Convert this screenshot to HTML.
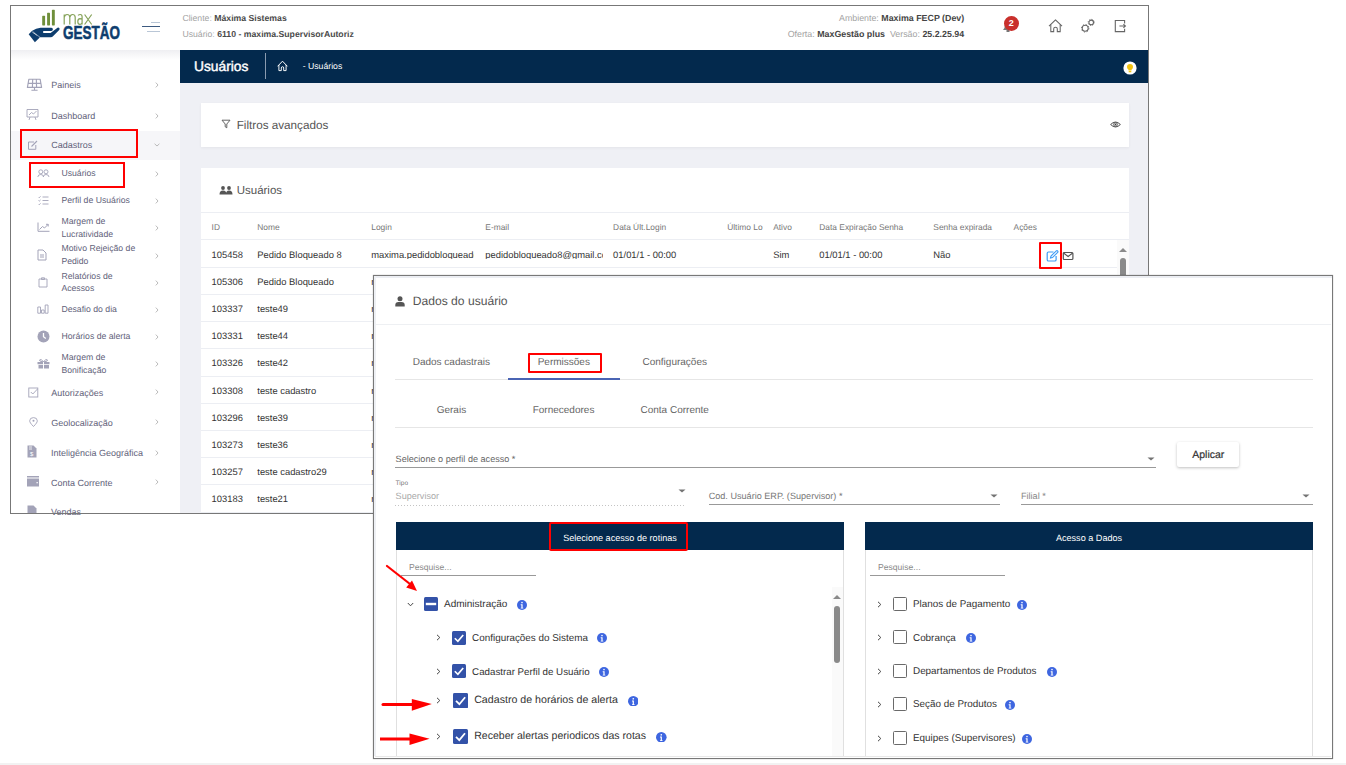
<!DOCTYPE html>
<html><head><meta charset="utf-8"><style>
html,body{margin:0;padding:0;width:1346px;height:765px;overflow:hidden;background:#fff;font-family:"Liberation Sans",sans-serif}
.t{position:absolute;white-space:nowrap;line-height:1;text-rendering:geometricPrecision}
.r{position:absolute;display:block}
</style></head><body>
<div class="r" style="left:0px;top:763px;width:1346px;height:2px;background:#f2f2f2"></div>
<div class="r" style="left:10px;top:5px;width:1139px;height:509px;border:1px solid #777;box-sizing:border-box;background:#fff"></div>
<div class="r" style="left:180px;top:83px;width:968px;height:430px;background:#eff0f5"></div>
<div class="r" style="left:11px;top:50px;width:169px;height:10px;background:linear-gradient(#efeff2,#fff)"></div>
<div class="r" style="left:180px;top:50px;width:968px;height:33px;background:#03294d"></div>
<svg class="r" style="left:26px;top:8px;" width="100" height="38" viewBox="0 0 100 38">
<rect x="16.2" y="7.8" width="2.9" height="9.6" rx="0.6" fill="#6f8f3a"/>
<rect x="21.1" y="4.8" width="2.9" height="12.6" rx="0.6" fill="#6f8f3a"/>
<rect x="25.9" y="1.8" width="2.9" height="15.6" rx="0.6" fill="#6f8f3a"/>
<path d="M2.7 26.3 L6.2 22.7 L13.8 29.6 L8.9 34.2 Z" fill="#0d3d6e"/>
<path d="M6.4 24.1 L11.3 27.5" stroke="#fff" stroke-width="0.8"/>
<path d="M6.2 22.7 Q10 20.2 14.6 19.7 H25.4 Q26.9 19.8 26.9 21.3 Q26.8 22.9 25.3 23 H17.2 V24.9 H24.6 L31.5 19.7 Q32.5 19.1 33.3 19.9 Q34 20.8 33.2 21.9 L27.2 28 Q26.2 29.2 24.6 29.2 H14.2 Z" fill="#0d3d6e"/>
<path d="M38.2 6.5 V16.5 M38.2 9.5 Q38.8 6.5 41.1 6.5 Q43.8 6.5 43.8 9.5 V16.5 M43.8 9.5 Q44.4 6.5 46.6 6.5 Q49.2 6.5 49.2 9.5 V16.5" fill="none" stroke="#86a35a" stroke-width="1.2"/>
<path d="M52 7.4 Q53 6.5 54.3 6.5 Q56.1 6.5 56.1 8.8 V16.5 M56.1 11.1 Q55 10.7 54 10.7 Q51.8 10.9 51.8 13.7 Q51.9 16.4 54 16.4 Q55.6 16.4 56.1 14.8" fill="none" stroke="#86a35a" stroke-width="1.2"/>
<path d="M58.6 6.5 L65.7 16.5 M65.7 6.5 L58.6 16.5" fill="none" stroke="#86a35a" stroke-width="1.2"/>
<text x="37" y="31.5" font-family="Liberation Sans" font-weight="700" font-size="17.5" fill="#0d3d6e" stroke="#0d3d6e" stroke-width="0.55" transform="translate(37 0) scale(0.77 1) translate(-37 0)">GESTÃO</text>
</svg>
<div class="r" style="left:151px;top:21.5px;width:9px;height:1.3px;background:#b9c6d6"></div>
<div class="r" style="left:142px;top:26px;width:18px;height:1.3px;background:#3d5a80"></div>
<div class="r" style="left:147px;top:30.5px;width:13px;height:1.3px;background:#b9c6d6"></div>
<div class="t" style="left:182.40px;top:14px;font-size:8.7px;color:#4a4a4a;font-weight:400;"><span style="color:#a3a3a3">Cliente:</span> <b>Máxima Sistemas</b></div>
<div class="t" style="left:182.40px;top:30px;font-size:8.7px;color:#4a4a4a;font-weight:400;"><span style="color:#a3a3a3">Usuário:</span> <b>6110 - maxima.SupervisorAutoriz</b></div>
<div class="t" style="right:381.80px;top:14px;font-size:8.85px;color:#444;font-weight:400;"><span style="color:#a3a3a3">Ambiente:</span> <b>Maxima FECP (Dev)</b></div>
<div class="t" style="right:381.80px;top:30px;font-size:8.85px;color:#444;font-weight:400;"><span style="color:#a3a3a3">Oferta:</span> <b>MaxGestão plus</b> &nbsp;<span style="color:#a3a3a3">Versão:</span> <b>25.2.25.94</b></div>
<svg class="r" style="left:1000px;top:18px;" width="16" height="16" viewBox="0 0 16 16"><path d="M3 12 Q5 10 5 6 Q5 3 8 3 Q11 3 11 6 Q11 10 13 12 Z" fill="#777"/><rect x="6.5" y="12" width="3" height="2" fill="#777"/></svg>
<div class="r" style="left:1003.8px;top:16.4px;width:14.8px;height:14.8px;border-radius:50%;background:#c9302c;color:#fff;font-size:9px;font-weight:700;text-align:center;line-height:14.8px">2</div>
<svg class="r" style="left:1048px;top:19px;" width="15" height="14" viewBox="0 0 15 14"><path d="M1 7.2 L7.5 0.9 L14 7.2" fill="none" stroke="#666" stroke-width="1.1" stroke-linejoin="round"/><path d="M2.8 5.6 V12.6 H5.7 V9.8 Q5.7 8.2 7.5 8.2 Q9.3 8.2 9.3 9.8 V12.6 H12.2 V5.6" fill="none" stroke="#666" stroke-width="1.05"/></svg>
<svg class="r" style="left:1079px;top:17px;" width="18" height="17" viewBox="0 0 18 17"><circle cx="6.2" cy="11.3" r="3.0" fill="none" stroke="#666" stroke-width="1.05"/><circle cx="6.2" cy="11.3" r="3.75" fill="none" stroke="#666" stroke-width="1" stroke-dasharray="1.18 1.77"/><circle cx="12.2" cy="5.4" r="2.3" fill="none" stroke="#666" stroke-width="1.05"/><circle cx="12.2" cy="5.4" r="3.05" fill="none" stroke="#666" stroke-width="1" stroke-dasharray="0.96 1.44"/></svg>
<svg class="r" style="left:1113px;top:19px;" width="15" height="14" viewBox="0 0 15 14"><path d="M11.6 4.4 V1.5 H2.3 V12.6 H11.6 V9.8" fill="none" stroke="#666" stroke-width="1.1"/><path d="M6.4 7 H12.3 M10.4 5.2 L12.4 7 L10.4 8.8" fill="none" stroke="#666" stroke-width="1.1"/></svg>
<div class="t" style="left:194.00px;top:60px;font-size:13.8px;color:#fff;font-weight:400;-webkit-text-stroke:0.4px #fff">Usuários</div>
<div class="r" style="left:265px;top:53px;width:1px;height:26px;background:#8a9bb0"></div>
<svg class="r" style="left:277px;top:60px;" width="12" height="12" viewBox="0 0 12 12"><path d="M0.6 6.3 L5.5 1.2 L10.4 6.3" fill="none" stroke="#fff" stroke-width="1" stroke-linejoin="round"/><path d="M1.9 5 V10.6 H4.3 V8 Q4.3 6.7 5.5 6.7 Q6.7 6.7 6.7 8 V10.6 H9.1 V5" fill="none" stroke="#fff" stroke-width="0.95"/></svg>
<div class="t" style="left:302.70px;top:62px;font-size:8.7px;color:#fff;font-weight:400;">- Usuários</div>
<svg class="r" style="left:1123px;top:61px;" width="14" height="14" viewBox="0 0 14 14"><circle cx="7" cy="7" r="6.6" fill="#fff"/><path d="M7 3 Q10 3 10 6 Q10 7.5 8.5 8.7 V9.6 H5.5 V8.7 Q4 7.5 4 6 Q4 3 7 3 Z" fill="#f2c30f"/><rect x="5.7" y="10" width="2.6" height="1.3" fill="#f2c30f"/></svg>
<div class="r" style="left:201px;top:103px;width:928px;height:44px;background:#fff;box-shadow:0 1px 3px rgba(0,0,0,0.05)"></div>
<svg class="r" style="left:221px;top:119px;" width="10" height="10" viewBox="0 0 10 10"><path d="M1 1.2 H9 L5.8 5 V8.8 L4.2 7.8 V5 Z" fill="none" stroke="#555" stroke-width="0.9"/></svg>
<div class="t" style="left:236.70px;top:120px;font-size:11.7px;color:#555;font-weight:400;">Filtros avançados</div>
<svg class="r" style="left:1110px;top:121px;" width="11" height="7" viewBox="0 0 11 7"><path d="M0.6 3.5 Q5.5 -1.5 10.4 3.5 Q5.5 8.5 0.6 3.5 Z" fill="none" stroke="#444" stroke-width="0.9"/><circle cx="5.5" cy="3.5" r="1.9" fill="none" stroke="#444" stroke-width="0.8"/><circle cx="5.5" cy="3.5" r="0.9" fill="#444"/></svg>
<div class="r" style="left:201px;top:168px;width:928px;height:345px;background:#fff"></div>
<svg class="r" style="left:219px;top:186px;" width="14" height="9" viewBox="0 0 14 9"><circle cx="4" cy="2" r="1.9" fill="#555"/><circle cx="10" cy="2" r="1.9" fill="#555"/><path d="M0.5 8.6 Q0.5 4.6 4 4.6 Q7.5 4.6 7.5 8.6 Z M7 8.6 Q7 4.6 10 4.6 Q13.5 4.6 13.5 8.6 Z" fill="#555"/></svg>
<div class="t" style="left:236.70px;top:186px;font-size:11.5px;color:#555;font-weight:400;">Usuários</div>
<div class="r" style="left:201px;top:212px;width:928px;height:1px;background:#eceef3"></div>
<div class="t" style="left:211.60px;top:223px;font-size:8.4px;color:#777;font-weight:400;">ID</div>
<div class="t" style="left:257.30px;top:223px;font-size:8.4px;color:#777;font-weight:400;">Nome</div>
<div class="t" style="left:371.30px;top:223px;font-size:8.4px;color:#777;font-weight:400;">Login</div>
<div class="t" style="left:485.30px;top:223px;font-size:8.4px;color:#777;font-weight:400;">E-mail</div>
<div class="t" style="left:613.10px;top:223px;font-size:8.4px;color:#777;font-weight:400;">Data Últ.Login</div>
<div class="t" style="left:727.20px;top:223px;font-size:8.4px;color:#777;font-weight:400;">Último Lo</div>
<div class="t" style="left:773.20px;top:223px;font-size:8.4px;color:#777;font-weight:400;">Ativo</div>
<div class="t" style="left:819.30px;top:223px;font-size:8.4px;color:#777;font-weight:400;">Data Expiração Senha</div>
<div class="t" style="left:933.30px;top:223px;font-size:8.4px;color:#777;font-weight:400;">Senha expirada</div>
<div class="t" style="left:1013.60px;top:223px;font-size:8.4px;color:#777;font-weight:400;">Ações</div>
<div class="r" style="left:201px;top:239px;width:928px;height:1px;background:#eceef3"></div>
<div class="t" style="left:211.60px;top:250px;font-size:9.4px;color:#333;font-weight:400;">105458</div>
<div class="t" style="left:257.30px;top:250px;font-size:9.4px;color:#333;font-weight:400;">Pedido Bloqueado 8</div>
<div class="t" style="left:371.30px;top:250px;font-size:9.4px;color:#333;font-weight:400;width:103px;overflow:hidden">maxima.pedidobloqueado</div>
<div class="r" style="left:201px;top:267px;width:916px;height:1px;background:#eceef3"></div>
<div class="t" style="left:211.60px;top:277px;font-size:9.4px;color:#333;font-weight:400;">105306</div>
<div class="t" style="left:257.30px;top:277px;font-size:9.4px;color:#333;font-weight:400;">Pedido Bloqueado</div>
<div class="t" style="left:371.30px;top:277px;font-size:9.4px;color:#333;font-weight:400;width:103px;overflow:hidden">maxima.pedidobloqueado</div>
<div class="r" style="left:201px;top:294px;width:928px;height:1px;background:#eceef3"></div>
<div class="t" style="left:211.60px;top:304px;font-size:9.4px;color:#333;font-weight:400;">103337</div>
<div class="t" style="left:257.30px;top:304px;font-size:9.4px;color:#333;font-weight:400;">teste49</div>
<div class="t" style="left:371.30px;top:304px;font-size:9.4px;color:#333;font-weight:400;width:103px;overflow:hidden">maxima.pedidobloqueado</div>
<div class="r" style="left:201px;top:321px;width:928px;height:1px;background:#eceef3"></div>
<div class="t" style="left:211.60px;top:331px;font-size:9.4px;color:#333;font-weight:400;">103331</div>
<div class="t" style="left:257.30px;top:331px;font-size:9.4px;color:#333;font-weight:400;">teste44</div>
<div class="t" style="left:371.30px;top:331px;font-size:9.4px;color:#333;font-weight:400;width:103px;overflow:hidden">maxima.pedidobloqueado</div>
<div class="r" style="left:201px;top:348px;width:928px;height:1px;background:#eceef3"></div>
<div class="t" style="left:211.60px;top:358px;font-size:9.4px;color:#333;font-weight:400;">103326</div>
<div class="t" style="left:257.30px;top:358px;font-size:9.4px;color:#333;font-weight:400;">teste42</div>
<div class="t" style="left:371.30px;top:358px;font-size:9.4px;color:#333;font-weight:400;width:103px;overflow:hidden">maxima.pedidobloqueado</div>
<div class="r" style="left:201px;top:376px;width:928px;height:1px;background:#eceef3"></div>
<div class="t" style="left:211.60px;top:386px;font-size:9.4px;color:#333;font-weight:400;">103308</div>
<div class="t" style="left:257.30px;top:386px;font-size:9.4px;color:#333;font-weight:400;">teste cadastro</div>
<div class="t" style="left:371.30px;top:386px;font-size:9.4px;color:#333;font-weight:400;width:103px;overflow:hidden">maxima.pedidobloqueado</div>
<div class="r" style="left:201px;top:403px;width:928px;height:1px;background:#eceef3"></div>
<div class="t" style="left:211.60px;top:413px;font-size:9.4px;color:#333;font-weight:400;">103296</div>
<div class="t" style="left:257.30px;top:413px;font-size:9.4px;color:#333;font-weight:400;">teste39</div>
<div class="t" style="left:371.30px;top:413px;font-size:9.4px;color:#333;font-weight:400;width:103px;overflow:hidden">maxima.pedidobloqueado</div>
<div class="r" style="left:201px;top:430px;width:928px;height:1px;background:#eceef3"></div>
<div class="t" style="left:211.60px;top:440px;font-size:9.4px;color:#333;font-weight:400;">103273</div>
<div class="t" style="left:257.30px;top:440px;font-size:9.4px;color:#333;font-weight:400;">teste36</div>
<div class="t" style="left:371.30px;top:440px;font-size:9.4px;color:#333;font-weight:400;width:103px;overflow:hidden">maxima.pedidobloqueado</div>
<div class="r" style="left:201px;top:457px;width:928px;height:1px;background:#eceef3"></div>
<div class="t" style="left:211.60px;top:467px;font-size:9.4px;color:#333;font-weight:400;">103257</div>
<div class="t" style="left:257.30px;top:467px;font-size:9.4px;color:#333;font-weight:400;">teste cadastro29</div>
<div class="t" style="left:371.30px;top:467px;font-size:9.4px;color:#333;font-weight:400;width:103px;overflow:hidden">maxima.pedidobloqueado</div>
<div class="r" style="left:201px;top:484px;width:928px;height:1px;background:#eceef3"></div>
<div class="t" style="left:211.60px;top:494px;font-size:9.4px;color:#333;font-weight:400;">103183</div>
<div class="t" style="left:257.30px;top:494px;font-size:9.4px;color:#333;font-weight:400;">teste21</div>
<div class="t" style="left:371.30px;top:494px;font-size:9.4px;color:#333;font-weight:400;width:103px;overflow:hidden">maxima.pedidobloqueado</div>
<div class="r" style="left:201px;top:512px;width:928px;height:1px;background:#eceef3"></div>
<div class="t" style="left:485.30px;top:250px;font-size:9.4px;color:#333;font-weight:400;width:118px;overflow:hidden">pedidobloqueado8@gmail.com</div>
<div class="t" style="left:613.10px;top:250px;font-size:9.4px;color:#333;font-weight:400;">01/01/1 - 00:00</div>
<div class="t" style="left:773.20px;top:250px;font-size:9.4px;color:#333;font-weight:400;">Sim</div>
<div class="t" style="left:819.30px;top:250px;font-size:9.4px;color:#333;font-weight:400;">01/01/1 - 00:00</div>
<div class="t" style="left:933.30px;top:250px;font-size:9.4px;color:#333;font-weight:400;">Não</div>
<svg class="r" style="left:1046px;top:250px;" width="13" height="12" viewBox="0 0 13 12"><path d="M7.5 2 H2.5 Q1.2 2 1.2 3.3 V9.7 Q1.2 11 2.5 11 H8.8 Q10.1 11 10.1 9.7 V6" fill="none" stroke="#3d9bf5" stroke-width="1.2"/><path d="M4.5 8 L5 6 L10.3 0.9 Q11 0.4 11.7 1 Q12.3 1.7 11.7 2.3 L6.5 7.6 Z" fill="none" stroke="#3d9bf5" stroke-width="1.1"/></svg>
<svg class="r" style="left:1062px;top:251px;" width="12" height="10" viewBox="0 0 12 10"><rect x="1.3" y="1.5" width="9.6" height="7" rx="1" fill="none" stroke="#555" stroke-width="1.2"/><path d="M1.5 2 L6.1 5.5 L10.7 2" fill="none" stroke="#555" stroke-width="1.1"/></svg>
<div class="r" style="left:1039px;top:242px;width:23px;height:27px;border:2px solid #f00;box-sizing:border-box;border-radius:1px"></div>
<div class="r" style="left:1117px;top:240px;width:12px;height:40px;background:#fafafa"></div>
<svg class="r" style="left:1118px;top:247px;" width="10" height="6" viewBox="0 0 10 6"><path d="M1 5 L5 1 L9 5 Z" fill="#8a8a8a"/></svg>
<div class="r" style="left:1120px;top:258px;width:6px;height:30px;background:#8a8a8a;border-radius:3px"></div>
<div class="r" style="left:11px;top:130.5px;width:169px;height:29px;background:#f6f6f9"></div>
<div class="t" style="left:51.30px;top:81px;font-size:9px;color:#62627a;font-weight:400;">Paineis</div>
<svg class="r" style="left:155px;top:82.4px;" width="4" height="6" viewBox="0 0 4 6"><path d="M0.8 0.6 L3 3 L0.8 5.4" fill="none" stroke="#aaa" stroke-width="0.8"/></svg>
<svg class="r" style="left:26px;top:78px;" width="17" height="14" viewBox="0 0 17 14"><path d="M2.9 1.2 H14.1 L15.6 9.4 H1.4 Z M2.2 5.3 H14.8 M6.7 1.2 L6.4 9.4 M10.3 1.2 L10.6 9.4" fill="none" stroke="#a3a3b8" stroke-width="1.15" stroke-linejoin="round"/><path d="M8.5 9.6 V11.8 M5.4 12.2 H11.6" stroke="#a3a3b8" stroke-width="1.1"/></svg>
<div class="t" style="left:51.30px;top:112px;font-size:9px;color:#62627a;font-weight:400;">Dashboard</div>
<svg class="r" style="left:155px;top:112.5px;" width="4" height="6" viewBox="0 0 4 6"><path d="M0.8 0.6 L3 3 L0.8 5.4" fill="none" stroke="#aaa" stroke-width="0.8"/></svg>
<svg class="r" style="left:26px;top:108px;" width="13" height="13" viewBox="0 0 13 13"><path d="M1 1.5 H12 V9 H1 Z M3 7 L5.5 4.5 L7.5 6 L10.5 3 M4 9 L3 12 M9 9 L10 12" fill="none" stroke="#a3a3b8" stroke-width="0.9"/></svg>
<div class="t" style="left:51.30px;top:141px;font-size:9px;color:#62627a;font-weight:400;">Cadastros</div>
<svg class="r" style="left:154px;top:143px;" width="6" height="4" viewBox="0 0 6 4"><path d="M0.6 0.8 L3 3 L5.4 0.8" fill="none" stroke="#aaa" stroke-width="0.8"/></svg>
<svg class="r" style="left:27px;top:140px;" width="12" height="10" viewBox="0 0 12 10"><path d="M7 2 H1.5 V9.3 H8.8 V5" fill="none" stroke="#a3a3b8" stroke-width="1"/><path d="M4.5 6.5 L10 1" fill="none" stroke="#a3a3b8" stroke-width="1.1"/></svg>
<div class="r" style="left:19.7px;top:129.3px;width:118px;height:29px;border:2px solid #f00;box-sizing:border-box"></div>
<div class="t" style="left:61.40px;top:169px;font-size:8.7px;color:#62627a;font-weight:400;">Usuários</div>
<svg class="r" style="left:155px;top:170.8px;" width="4" height="6" viewBox="0 0 4 6"><path d="M0.8 0.6 L3 3 L0.8 5.4" fill="none" stroke="#aaa" stroke-width="0.8"/></svg>
<svg class="r" style="left:37px;top:169px;" width="13" height="9" viewBox="0 0 13 9"><circle cx="3.8" cy="2.8" r="2" fill="none" stroke="#a3a3b8" stroke-width="0.9"/><circle cx="9" cy="2.8" r="2" fill="none" stroke="#a3a3b8" stroke-width="0.9"/><path d="M0.8 8 Q1 5.5 3.8 5.5 Q6.4 5.5 6.6 8 M6.2 8 Q6.4 5.5 9 5.5 Q11.8 5.5 12 8" fill="none" stroke="#a3a3b8" stroke-width="0.9"/></svg>
<div class="r" style="left:28.7px;top:161.6px;width:96px;height:26px;border:2px solid #f00;box-sizing:border-box"></div>
<div class="t" style="left:61.40px;top:196px;font-size:8.7px;color:#62627a;font-weight:400;">Perfil de Usuários</div>
<svg class="r" style="left:155px;top:198.2px;" width="4" height="6" viewBox="0 0 4 6"><path d="M0.8 0.6 L3 3 L0.8 5.4" fill="none" stroke="#aaa" stroke-width="0.8"/></svg>
<svg class="r" style="left:38px;top:196px;" width="11" height="9" viewBox="0 0 11 9"><path d="M4.5 1 H10.5 M4.5 4.5 H10.5 M4.5 8 H10.5 M0.5 1 L1.2 1.7 L2.6 0.4 M0.5 4.5 L1.2 5.2 L2.6 3.9 M0.5 8 L1.2 8.7 L2.6 7.4" fill="none" stroke="#a3a3b8" stroke-width="0.9"/></svg>
<div class="t" style="left:61.40px;top:217px;font-size:8.7px;color:#62627a;font-weight:400;">Margem de</div>
<div class="t" style="left:61.40px;top:230px;font-size:8.7px;color:#62627a;font-weight:400;">Lucratividade</div>
<svg class="r" style="left:155px;top:225.4px;" width="4" height="6" viewBox="0 0 4 6"><path d="M0.8 0.6 L3 3 L0.8 5.4" fill="none" stroke="#aaa" stroke-width="0.8"/></svg>
<svg class="r" style="left:37px;top:222px;" width="13" height="10" viewBox="0 0 13 10"><path d="M1 0.5 V9.3 H12.5 M2.5 7.5 L5.5 4.5 L7.5 6 L11 2.5 M9 2.3 H11.2 V4.5" fill="none" stroke="#a3a3b8" stroke-width="1"/></svg>
<div class="t" style="left:61.40px;top:244px;font-size:8.7px;color:#62627a;font-weight:400;">Motivo Rejeição de</div>
<div class="t" style="left:61.40px;top:257px;font-size:8.7px;color:#62627a;font-weight:400;">Pedido</div>
<svg class="r" style="left:155px;top:252.6px;" width="4" height="6" viewBox="0 0 4 6"><path d="M0.8 0.6 L3 3 L0.8 5.4" fill="none" stroke="#aaa" stroke-width="0.8"/></svg>
<svg class="r" style="left:37px;top:249px;" width="10" height="12" viewBox="0 0 10 12"><path d="M1 1 H6 L9 4 V11 H1 Z M3 6 H7 M3 8 H7" fill="none" stroke="#a3a3b8" stroke-width="1"/></svg>
<div class="t" style="left:61.40px;top:272px;font-size:8.7px;color:#62627a;font-weight:400;">Relatórios de</div>
<div class="t" style="left:61.40px;top:284px;font-size:8.7px;color:#62627a;font-weight:400;">Acessos</div>
<svg class="r" style="left:155px;top:279.8px;" width="4" height="6" viewBox="0 0 4 6"><path d="M0.8 0.6 L3 3 L0.8 5.4" fill="none" stroke="#aaa" stroke-width="0.8"/></svg>
<svg class="r" style="left:38px;top:277px;" width="10" height="11" viewBox="0 0 10 11"><path d="M1 2 H9 V10 H1 Z M3.5 0.8 H6.5 V2.5 H3.5 Z" fill="none" stroke="#a3a3b8" stroke-width="0.9"/></svg>
<div class="t" style="left:61.40px;top:305px;font-size:8.7px;color:#62627a;font-weight:400;">Desafio do dia</div>
<svg class="r" style="left:155px;top:306.5px;" width="4" height="6" viewBox="0 0 4 6"><path d="M0.8 0.6 L3 3 L0.8 5.4" fill="none" stroke="#aaa" stroke-width="0.8"/></svg>
<svg class="r" style="left:37px;top:304px;" width="12" height="10" viewBox="0 0 12 10"><path d="M0.8 3 H3.5 V9.2 H0.8 Z M4.5 6 H7.2 V9.2 H4.5 Z M8.2 1 H11 V9.2 H8.2 Z" fill="none" stroke="#a3a3b8" stroke-width="0.9"/></svg>
<div class="t" style="left:61.40px;top:332px;font-size:8.7px;color:#62627a;font-weight:400;">Horários de alerta</div>
<svg class="r" style="left:155px;top:333.8px;" width="4" height="6" viewBox="0 0 4 6"><path d="M0.8 0.6 L3 3 L0.8 5.4" fill="none" stroke="#aaa" stroke-width="0.8"/></svg>
<svg class="r" style="left:37px;top:330px;" width="13" height="13" viewBox="0 0 13 13"><circle cx="6.5" cy="6.5" r="6" fill="#a3a3b8"/><path d="M6.5 3 V6.8 L8.8 8.6" fill="none" stroke="#fff" stroke-width="1.3"/></svg>
<div class="t" style="left:61.40px;top:353px;font-size:8.7px;color:#62627a;font-weight:400;">Margem de</div>
<div class="t" style="left:61.40px;top:366px;font-size:8.7px;color:#62627a;font-weight:400;">Bonificação</div>
<svg class="r" style="left:155px;top:361.3px;" width="4" height="6" viewBox="0 0 4 6"><path d="M0.8 0.6 L3 3 L0.8 5.4" fill="none" stroke="#aaa" stroke-width="0.8"/></svg>
<svg class="r" style="left:37px;top:358px;" width="13" height="11" viewBox="0 0 13 11"><path d="M0.5 4 H12.5 V6.3 H0.5 Z M1.5 7 H12 V10.5 H1.5 Z" fill="#a3a3b8"/><path d="M6.5 4 Q4 0 2.5 2 Q2 3.5 6.5 4 Q9 0 10.5 2 Q11 3.5 6.5 4" fill="none" stroke="#a3a3b8" stroke-width="1"/><rect x="6" y="4" width="1" height="7" fill="#fff"/></svg>
<div class="t" style="left:51.30px;top:389px;font-size:9px;color:#62627a;font-weight:400;">Autorizações</div>
<svg class="r" style="left:155px;top:389.4px;" width="4" height="6" viewBox="0 0 4 6"><path d="M0.8 0.6 L3 3 L0.8 5.4" fill="none" stroke="#aaa" stroke-width="0.8"/></svg>
<svg class="r" style="left:28px;top:387px;" width="11" height="11" viewBox="0 0 11 11"><rect x="0.8" y="1" width="9" height="9" fill="none" stroke="#a3a3b8" stroke-width="0.9"/><path d="M2.8 5 L4.8 7 L9.5 2" fill="none" stroke="#a3a3b8" stroke-width="0.9"/></svg>
<div class="t" style="left:51.30px;top:419px;font-size:9px;color:#62627a;font-weight:400;">Geolocalização</div>
<svg class="r" style="left:155px;top:419.1px;" width="4" height="6" viewBox="0 0 4 6"><path d="M0.8 0.6 L3 3 L0.8 5.4" fill="none" stroke="#aaa" stroke-width="0.8"/></svg>
<svg class="r" style="left:29px;top:417px;" width="9" height="10" viewBox="0 0 9 10"><path d="M4.5 9.5 Q0.5 5.5 0.7 3.8 Q0.8 0.6 4.5 0.6 Q8.2 0.6 8.3 3.8 Q8.5 5.5 4.5 9.5 Z" fill="none" stroke="#a3a3b8" stroke-width="0.9"/><circle cx="4.5" cy="3.8" r="1" fill="#a3a3b8"/></svg>
<div class="t" style="left:51.00px;top:449px;font-size:9px;color:#62627a;font-weight:400;">Inteligência Geográfica</div>
<svg class="r" style="left:155px;top:449.5px;" width="4" height="6" viewBox="0 0 4 6"><path d="M0.8 0.6 L3 3 L0.8 5.4" fill="none" stroke="#aaa" stroke-width="0.8"/></svg>
<svg class="r" style="left:27px;top:445px;" width="10" height="13" viewBox="0 0 10 13"><path d="M0.5 0.5 H6.5 L9.5 3.5 V12.5 H0.5 Z" fill="#a3a3b8"/><path d="M2 2 H5 M2 4 H5" stroke="#fff" stroke-width="0.8"/><text x="3" y="11" font-size="6" font-family="Liberation Sans" fill="#fff">$</text></svg>
<div class="t" style="left:51.00px;top:479px;font-size:9px;color:#62627a;font-weight:400;">Conta Corrente</div>
<svg class="r" style="left:155px;top:478.8px;" width="4" height="6" viewBox="0 0 4 6"><path d="M0.8 0.6 L3 3 L0.8 5.4" fill="none" stroke="#aaa" stroke-width="0.8"/></svg>
<svg class="r" style="left:27px;top:476px;" width="12" height="11" viewBox="0 0 12 11"><rect x="0" y="0" width="12" height="1.5" fill="#a3a3b8"/><rect x="0" y="2.5" width="12" height="8" fill="#a3a3b8"/><rect x="9.5" y="6" width="1.3" height="1.3" fill="#fff"/></svg>
<div class="t" style="left:51.00px;top:508px;font-size:9px;color:#62627a;font-weight:400;">Vendas</div>
<svg class="r" style="left:27px;top:505px;" width="10" height="8" viewBox="0 0 10 8"><path d="M0.5 0.5 H6.5 L9.5 3.5 V12.5 H0.5 Z" fill="#a3a3b8"/></svg>
<div class="r" style="left:10px;top:513px;width:364px;height:1px;background:#777"></div>
<div class="r" style="left:373px;top:275px;width:960px;height:484px;border:1px solid #787878;box-sizing:border-box;background:#fff;box-shadow:0 0 1px rgba(0,0,0,0.35)"></div>
<div class="r" style="left:374px;top:276px;width:958px;height:2px;background:#eceef3"></div>
<div class="r" style="left:374px;top:276px;width:2px;height:480px;background:#eef0f4"></div>
<svg class="r" style="left:395px;top:296px;" width="11" height="11" viewBox="0 0 11 11"><circle cx="5" cy="2.7" r="2.5" fill="#555"/><path d="M0.3 10.5 V9 Q0.3 6 3.5 6 H6.5 Q9.7 6 9.7 9 V10.5 Z" fill="#555"/></svg>
<div class="t" style="left:412.80px;top:295px;font-size:12.1px;color:#555;font-weight:400;">Dados do usuário</div>
<div class="r" style="left:375px;top:324px;width:956px;height:1px;background:#eef0f3"></div>
<div class="t" style="left:412.70px;top:358px;font-size:10px;color:#666;font-weight:400;">Dados cadastrais</div>
<div class="t" style="left:537.70px;top:358px;font-size:10px;color:#666;font-weight:400;">Permissões</div>
<div class="t" style="left:642.50px;top:358px;font-size:10px;color:#666;font-weight:400;">Configurações</div>
<div class="r" style="left:395px;top:379px;width:918px;height:1px;background:#e6e6e6"></div>
<div class="r" style="left:508px;top:377.5px;width:112px;height:2px;background:#4a64b4"></div>
<div class="r" style="left:527.6px;top:353px;width:74px;height:20.3px;border:2px solid #f00;box-sizing:border-box;border-radius:1px"></div>
<div class="t" style="left:436.70px;top:406px;font-size:10px;color:#666;font-weight:400;">Gerais</div>
<div class="t" style="left:532.70px;top:406px;font-size:10px;color:#666;font-weight:400;">Fornecedores</div>
<div class="t" style="left:640.50px;top:406px;font-size:10px;color:#666;font-weight:400;">Conta Corrente</div>
<div class="r" style="left:395px;top:427px;width:918px;height:1px;background:#e6e6e6"></div>
<div class="t" style="left:395.60px;top:455px;font-size:9.1px;color:#666;font-weight:400;">Selecione o perfil de acesso *</div>
<div class="r" style="left:395px;top:466.5px;width:761px;height:1px;background:#999"></div>
<svg class="r" style="left:1146.5px;top:456.5px;" width="8" height="4" viewBox="0 0 8 4"><path d="M0.5 0.5 H7.5 L4 3.5 Z" fill="#737373"/></svg>
<div class="r" style="left:1177.4px;top:442px;width:62px;height:25.4px;background:#fff;box-shadow:0 1px 3px rgba(0,0,0,0.25);border-radius:2px"></div>
<div class="t" style="left:908.30px;width:600px;text-align:center;top:450px;font-size:10.5px;color:#333;font-weight:400;-webkit-text-stroke:0.2px #333">Aplicar</div>
<div class="t" style="left:395.60px;top:481px;font-size:6.5px;color:#777;font-weight:400;">Tipo</div>
<div class="t" style="left:395.60px;top:492px;font-size:9.1px;color:#aaa;font-weight:400;">Supervisor</div>
<div class="r" style="left:395px;top:504.5px;width:291px;height:1px;background:repeating-linear-gradient(90deg,#c4c4c4 0 1.5px,transparent 1.5px 3px)"></div>
<svg class="r" style="left:677.7px;top:489px;" width="8" height="4" viewBox="0 0 8 4"><path d="M0.5 0.5 H7.5 L4 3.5 Z" fill="#737373"/></svg>
<div class="t" style="left:708.70px;top:492px;font-size:9.1px;color:#777;font-weight:400;">Cod. Usuário ERP. (Supervisor) *</div>
<div class="r" style="left:708.7px;top:504px;width:291px;height:1px;background:#999"></div>
<svg class="r" style="left:990px;top:493.5px;" width="8" height="4" viewBox="0 0 8 4"><path d="M0.5 0.5 H7.5 L4 3.5 Z" fill="#737373"/></svg>
<div class="t" style="left:1021.00px;top:492px;font-size:9.1px;color:#888;font-weight:400;">Filial *</div>
<div class="r" style="left:1021px;top:504px;width:291.5px;height:1px;background:#999"></div>
<svg class="r" style="left:1302.4px;top:493.5px;" width="8" height="4" viewBox="0 0 8 4"><path d="M0.5 0.5 H7.5 L4 3.5 Z" fill="#737373"/></svg>
<div class="r" style="left:396px;top:522px;width:448px;height:235px;border:1px solid #e0e0e0;border-bottom:none;box-sizing:border-box"></div>
<div class="r" style="left:396px;top:522px;width:448px;height:28px;background:#03294d"></div>
<div class="t" style="left:320.00px;width:600px;text-align:center;top:534px;font-size:9.1px;color:#fff;font-weight:400;">Selecione acesso de rotinas</div>
<div class="t" style="left:409.00px;top:563px;font-size:8.6px;color:#8a8a8a;font-weight:400;">Pesquise...</div>
<div class="r" style="left:400.5px;top:575px;width:135px;height:1px;background:#999"></div>
<div class="r" style="left:865px;top:522px;width:448px;height:235px;border:1px solid #e0e0e0;border-bottom:none;box-sizing:border-box"></div>
<div class="r" style="left:865px;top:522px;width:448px;height:28px;background:#03294d"></div>
<div class="t" style="left:789.00px;width:600px;text-align:center;top:534px;font-size:9.1px;color:#fff;font-weight:400;">Acesso a Dados</div>
<div class="t" style="left:878.00px;top:563px;font-size:8.6px;color:#8a8a8a;font-weight:400;">Pesquise...</div>
<div class="r" style="left:869.5px;top:575px;width:135px;height:1px;background:#999"></div>
<div class="r" style="left:375px;top:756px;width:956px;height:1px;background:#e8e8e8"></div>
<div class="r" style="left:832px;top:587px;width:11px;height:169px;background:#fafafa"></div>
<div class="r" style="left:549px;top:521.5px;width:139px;height:29px;border:2px solid #f00;box-sizing:border-box;border-radius:2px"></div>
<svg class="r" style="left:407.2px;top:601.5px;" width="7" height="5" viewBox="0 0 7 5"><path d="M0.8 1 L3.5 3.8 L6.2 1" fill="none" stroke="#444" stroke-width="1"/></svg>
<svg class="r" style="left:424.3px;top:596.7px;" width="14" height="14" viewBox="0 0 14 14"><rect x="0" y="0" width="14" height="14" rx="1.5" fill="#3352a8"/><rect x="1.82" y="5.8" width="10.36" height="2.4" fill="#fff"/></svg>
<div class="t" style="left:444.00px;top:600px;font-size:10px;color:#333;font-weight:400;">Administração</div>
<svg class="r" style="left:516.9px;top:599.6px;" width="10" height="10" viewBox="0 0 10 10"><circle cx="5" cy="5" r="5" fill="#3e66e0"/><circle cx="5" cy="2.60" r="0.80" fill="#fff"/><path d="M3.70 4.25 H5.60 V7.75 H6.30 V8.50 H3.70 V7.75 H4.40 V5.25 H3.70 Z" fill="#fff"/></svg>
<svg class="r" style="left:436.0px;top:634.4px;" width="5" height="7" viewBox="0 0 5 7"><path d="M1 0.8 L3.8 3.5 L1 6.2" fill="none" stroke="#444" stroke-width="1"/></svg>
<svg class="r" style="left:452.3px;top:630.5px;" width="14" height="14" viewBox="0 0 14 14"><rect x="0" y="0" width="14" height="14" rx="1.5" fill="#3352a8"/><path d="M2.8000000000000003 7.28 L5.88 10.36 L11.200000000000001 3.9200000000000004" fill="none" stroke="#fff" stroke-width="1.68"/></svg>
<div class="t" style="left:472.10px;top:634px;font-size:9.9px;color:#333;font-weight:400;">Configurações do Sistema</div>
<svg class="r" style="left:597.1px;top:633.4px;" width="10" height="10" viewBox="0 0 10 10"><circle cx="5" cy="5" r="5" fill="#3e66e0"/><circle cx="5" cy="2.60" r="0.80" fill="#fff"/><path d="M3.70 4.25 H5.60 V7.75 H6.30 V8.50 H3.70 V7.75 H4.40 V5.25 H3.70 Z" fill="#fff"/></svg>
<svg class="r" style="left:436.0px;top:668.0px;" width="5" height="7" viewBox="0 0 5 7"><path d="M1 0.8 L3.8 3.5 L1 6.2" fill="none" stroke="#444" stroke-width="1"/></svg>
<svg class="r" style="left:452.3px;top:664.4px;" width="14" height="14" viewBox="0 0 14 14"><rect x="0" y="0" width="14" height="14" rx="1.5" fill="#3352a8"/><path d="M2.8000000000000003 7.28 L5.88 10.36 L11.200000000000001 3.9200000000000004" fill="none" stroke="#fff" stroke-width="1.68"/></svg>
<div class="t" style="left:472.10px;top:668px;font-size:9.75px;color:#333;font-weight:400;">Cadastrar Perfil de Usuário</div>
<svg class="r" style="left:598.8px;top:666.8px;" width="10" height="10" viewBox="0 0 10 10"><circle cx="5" cy="5" r="5" fill="#3e66e0"/><circle cx="5" cy="2.60" r="0.80" fill="#fff"/><path d="M3.70 4.25 H5.60 V7.75 H6.30 V8.50 H3.70 V7.75 H4.40 V5.25 H3.70 Z" fill="#fff"/></svg>
<svg class="r" style="left:436.0px;top:697.0px;" width="5" height="7" viewBox="0 0 5 7"><path d="M1 0.8 L3.8 3.5 L1 6.2" fill="none" stroke="#444" stroke-width="1"/></svg>
<svg class="r" style="left:453px;top:692.7px;" width="15.2" height="15.2" viewBox="0 0 15.2 15.2"><rect x="0" y="0" width="15.2" height="15.2" rx="1.5" fill="#3352a8"/><path d="M3.04 7.904 L6.3839999999999995 11.248 L12.16 4.256" fill="none" stroke="#fff" stroke-width="1.8239999999999998"/></svg>
<div class="t" style="left:474.20px;top:695px;font-size:10.65px;color:#333;font-weight:400;">Cadastro de horários de alerta</div>
<svg class="r" style="left:627.6px;top:695.9000000000001px;" width="10.6" height="10.6" viewBox="0 0 10.6 10.6"><circle cx="5.3" cy="5.3" r="5.3" fill="#3e66e0"/><circle cx="5.3" cy="2.76" r="0.85" fill="#fff"/><path d="M4.00 4.50 H5.90 V8.21 H6.60 V9.01 H4.00 V8.21 H4.70 V5.57 H4.00 Z" fill="#fff"/></svg>
<svg class="r" style="left:436.0px;top:732.5px;" width="5" height="7" viewBox="0 0 5 7"><path d="M1 0.8 L3.8 3.5 L1 6.2" fill="none" stroke="#444" stroke-width="1"/></svg>
<svg class="r" style="left:453px;top:728.6px;" width="15" height="15" viewBox="0 0 15 15"><rect x="0" y="0" width="15" height="15" rx="1.5" fill="#3352a8"/><path d="M3.0 7.800000000000001 L6.3 11.1 L12.0 4.2" fill="none" stroke="#fff" stroke-width="1.7999999999999998"/></svg>
<div class="t" style="left:474.20px;top:731px;font-size:10.56px;color:#333;font-weight:400;">Receber alertas periodicos das rotas</div>
<svg class="r" style="left:656.1px;top:731.5px;" width="10.6" height="10.6" viewBox="0 0 10.6 10.6"><circle cx="5.3" cy="5.3" r="5.3" fill="#3e66e0"/><circle cx="5.3" cy="2.76" r="0.85" fill="#fff"/><path d="M4.00 4.50 H5.90 V8.21 H6.60 V9.01 H4.00 V8.21 H4.70 V5.57 H4.00 Z" fill="#fff"/></svg>
<svg class="r" style="left:832px;top:594px;" width="10" height="6" viewBox="0 0 10 6"><path d="M1 5 L5 1 L9 5 Z" fill="#8a8a8a"/></svg>
<div class="r" style="left:834px;top:605.5px;width:6px;height:57px;background:#8a8a8a;border-radius:3px"></div>
<svg class="r" style="left:877.0px;top:600.5px;" width="5" height="7" viewBox="0 0 5 7"><path d="M1 0.8 L3.8 3.5 L1 6.2" fill="none" stroke="#444" stroke-width="1"/></svg>
<div class="r" style="left:893.4px;top:596.8px;width:14px;height:14px;border:1.5px solid #6a6a6a;box-sizing:border-box;border-radius:1.5px"></div>
<div class="t" style="left:913.00px;top:600px;font-size:9.9px;color:#333;font-weight:400;">Planos de Pagamento</div>
<svg class="r" style="left:1017px;top:599.5px;" width="10" height="10" viewBox="0 0 10 10"><circle cx="5" cy="5" r="5" fill="#3e66e0"/><circle cx="5" cy="2.60" r="0.80" fill="#fff"/><path d="M3.70 4.25 H5.60 V7.75 H6.30 V8.50 H3.70 V7.75 H4.40 V5.25 H3.70 Z" fill="#fff"/></svg>
<svg class="r" style="left:877.0px;top:634.1px;" width="5" height="7" viewBox="0 0 5 7"><path d="M1 0.8 L3.8 3.5 L1 6.2" fill="none" stroke="#444" stroke-width="1"/></svg>
<div class="r" style="left:893.4px;top:630.4px;width:14px;height:14px;border:1.5px solid #6a6a6a;box-sizing:border-box;border-radius:1.5px"></div>
<div class="t" style="left:913.00px;top:634px;font-size:9.9px;color:#333;font-weight:400;">Cobrança</div>
<svg class="r" style="left:965.7px;top:633.1px;" width="10" height="10" viewBox="0 0 10 10"><circle cx="5" cy="5" r="5" fill="#3e66e0"/><circle cx="5" cy="2.60" r="0.80" fill="#fff"/><path d="M3.70 4.25 H5.60 V7.75 H6.30 V8.50 H3.70 V7.75 H4.40 V5.25 H3.70 Z" fill="#fff"/></svg>
<svg class="r" style="left:877.0px;top:667.5px;" width="5" height="7" viewBox="0 0 5 7"><path d="M1 0.8 L3.8 3.5 L1 6.2" fill="none" stroke="#444" stroke-width="1"/></svg>
<div class="r" style="left:893.4px;top:663.8px;width:14px;height:14px;border:1.5px solid #6a6a6a;box-sizing:border-box;border-radius:1.5px"></div>
<div class="t" style="left:913.00px;top:667px;font-size:9.9px;color:#333;font-weight:400;">Departamentos de Produtos</div>
<svg class="r" style="left:1047px;top:666.5px;" width="10" height="10" viewBox="0 0 10 10"><circle cx="5" cy="5" r="5" fill="#3e66e0"/><circle cx="5" cy="2.60" r="0.80" fill="#fff"/><path d="M3.70 4.25 H5.60 V7.75 H6.30 V8.50 H3.70 V7.75 H4.40 V5.25 H3.70 Z" fill="#fff"/></svg>
<svg class="r" style="left:877.0px;top:701.0px;" width="5" height="7" viewBox="0 0 5 7"><path d="M1 0.8 L3.8 3.5 L1 6.2" fill="none" stroke="#444" stroke-width="1"/></svg>
<div class="r" style="left:893.4px;top:697.3px;width:14px;height:14px;border:1.5px solid #6a6a6a;box-sizing:border-box;border-radius:1.5px"></div>
<div class="t" style="left:913.00px;top:700px;font-size:9.9px;color:#333;font-weight:400;">Seção de Produtos</div>
<svg class="r" style="left:1005.2px;top:700.0px;" width="10" height="10" viewBox="0 0 10 10"><circle cx="5" cy="5" r="5" fill="#3e66e0"/><circle cx="5" cy="2.60" r="0.80" fill="#fff"/><path d="M3.70 4.25 H5.60 V7.75 H6.30 V8.50 H3.70 V7.75 H4.40 V5.25 H3.70 Z" fill="#fff"/></svg>
<svg class="r" style="left:877.0px;top:734.5px;" width="5" height="7" viewBox="0 0 5 7"><path d="M1 0.8 L3.8 3.5 L1 6.2" fill="none" stroke="#444" stroke-width="1"/></svg>
<div class="r" style="left:893.4px;top:730.8px;width:14px;height:14px;border:1.5px solid #6a6a6a;box-sizing:border-box;border-radius:1.5px"></div>
<div class="t" style="left:913.00px;top:734px;font-size:9.9px;color:#333;font-weight:400;">Equipes (Supervisores)</div>
<svg class="r" style="left:1021.9000000000001px;top:733.5px;" width="10" height="10" viewBox="0 0 10 10"><circle cx="5" cy="5" r="5" fill="#3e66e0"/><circle cx="5" cy="2.60" r="0.80" fill="#fff"/><path d="M3.70 4.25 H5.60 V7.75 H6.30 V8.50 H3.70 V7.75 H4.40 V5.25 H3.70 Z" fill="#fff"/></svg>
<svg class="r" style="left:380px;top:560px;" width="60" height="190" viewBox="0 0 60 190">
<path d="M7 6 L30 24" stroke="#f00" stroke-width="2.2" stroke-linecap="round"/>
<path d="M37 31 L26.2 27.6 L32 20.6 Z" fill="#f00"/>
<path d="M3 144.5 L34 144.5" stroke="#f00" stroke-width="3" stroke-linecap="round"/>
<path d="M51.8 144 L31.8 139 L31.8 150.8 Z" fill="#f00"/>
<path d="M0 179 L32 179" stroke="#f00" stroke-width="3" stroke-linecap="round"/>
<path d="M49.6 178.8 L29.5 173.5 L29.5 185 Z" fill="#f00"/>
</svg>
</body></html>
